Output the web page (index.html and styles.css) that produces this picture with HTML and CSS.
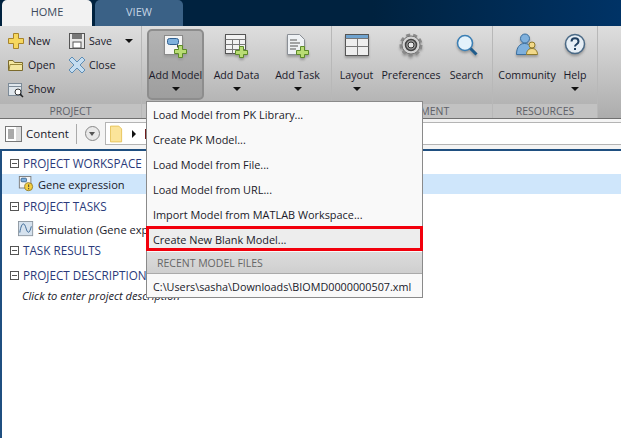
FILE: index.html
```html
<!DOCTYPE html>
<html lang="en">
<head>
    <meta charset="UTF-8">
    <title>SimBiology - Home</title>
    <link rel="stylesheet" href="styles.css">
</head>
<body>
    <div class="tabstrip">
        <div class="tab tab-active">HOME</div>
        <div class="tab tab-view">VIEW</div>
    </div>

    <div class="ribbon">
        <div class="section section-project">
            <div class="section-body project-grid">
                <div class="small-btn">
                    <svg class="ico" viewBox="0 0 18 18"><path d="M6.500 1.500h5v5h5v5h-5v5h-5v-5h-5v-5h5z" fill="#f6d75e" stroke="#a8842a"/></svg>
                    <span>New</span>
                </div>
                <div class="small-btn">
                    <svg class="ico" viewBox="0 0 18 18"><rect x="1.500" y="1.500" width="15" height="15" fill="#e8e8e8" stroke="#555"/><rect x="4" y="2" width="10" height="5" fill="#777"/><rect x="5" y="10" width="8" height="6" fill="#fff" stroke="#555"/></svg>
                    <span>Save</span>
                    <i class="caret caret-save"></i>
                </div>
                <div class="small-btn">
                    <svg class="ico" viewBox="0 0 18 18"><path d="M1.500 4.500v10h14v-8h-8l-1.500-2z" fill="#f3e6a0" stroke="#7b6a2c"/><path d="M2 14.500l1-6h13" fill="none" stroke="#9b8a3c"/></svg>
                    <span>Open</span>
                </div>
                <div class="small-btn">
                    <svg class="ico" viewBox="0 0 18 18"><path d="M4 1l5 5 5-5 3 3-5 5 5 5-3 3-5-5-5 5-3-3 5-5-5-5z" fill="#c5ddf0" stroke="#5d8db5"/></svg>
                    <span>Close</span>
                </div>
                <div class="small-btn">
                    <svg class="ico" viewBox="0 0 18 18"><rect x="1.500" y="3.500" width="13" height="12" fill="#dfe6ec" stroke="#7d8b98"/><path d="M1.500 6.500h13" stroke="#7d8b98"/><circle cx="11" cy="12" r="3" fill="#fff" stroke="#333"/><path d="M13 14l3 3" stroke="#222" stroke-width="1.500"/></svg>
                    <span>Show</span>
                </div>
            </div>
            <div class="section-label">PROJECT</div>
        </div>

        <div class="section section-model">
            <div class="section-body big-row">
                <div class="big-btn big-btn-on add-model">
                    <svg class="big-ico" viewBox="0 0 26 26"><rect x="1.500" y="2.500" width="18" height="19" fill="#f4f4f4" stroke="#8a8a8a"/><rect x="4.500" y="5.500" width="11" height="6" rx="2" fill="#7fb0dc" stroke="#2f5f8f"/><path d="M14.500 11.500v3" stroke="#444"/><path d="M15.500 12.500h4v4h4v4h-4v4h-4v-4h-4v-4h4z" fill="#b9dc74" stroke="#5d8a2a"/></svg>
                    <span>Add Model</span>
                    <i class="caret"></i>
                </div>
                <div class="big-btn add-data">
                    <svg class="big-ico" viewBox="0 0 26 26"><rect x="1.500" y="1.500" width="20" height="19" fill="#f2f2f2" stroke="#555"/><path d="M1.500 6.500h20M1.500 11.500h20M1.500 16.500h20M8.500 6.500v14M15.500 6.500v14" stroke="#777" fill="none"/><path d="M15.500 13.500h4v4h4v4h-4v3h-4v-3h-4v-4h4z" fill="#b9dc74" stroke="#5d8a2a"/></svg>
                    <span>Add Data</span>
                    <i class="caret"></i>
                </div>
                <div class="big-btn add-task">
                    <svg class="big-ico" viewBox="0 0 26 26"><path d="M2.500 1.500h12l5 5v15h-17z" fill="#eef1f4" stroke="#8a8f96"/><path d="M5 7h7M5 10h10M5 13h8M5 16h6" stroke="#555" fill="none"/><path d="M15.500 13.500h4v4h4v4h-4v3h-4v-3h-4v-4h4z" fill="#b9dc74" stroke="#5d8a2a"/></svg>
                    <span>Add Task</span>
                    <i class="caret"></i>
                </div>
            </div>
            <div class="section-label">&nbsp;</div>
        </div>

        <div class="section section-env">
            <div class="section-body big-row big-row-env">
                <div class="big-btn layout">
                    <svg class="big-ico" viewBox="0 0 26 26"><rect x="1.500" y="1.500" width="23" height="21" fill="#eee" stroke="#555"/><rect x="2" y="2" width="22" height="3" fill="#6fa3cf"/><path d="M1.500 5.500h23M1.500 13.500h23M13.500 5.500v17" stroke="#777" fill="none"/></svg>
                    <span>Layout</span>
                    <i class="caret"></i>
                </div>
                <div class="big-btn prefs">
                    <svg class="big-ico" viewBox="0 0 26 26"><circle cx="13" cy="12" r="10" fill="none" stroke="#8a8a8a" stroke-width="3" stroke-dasharray="4 3"/><circle cx="13" cy="12" r="9" fill="#d4d4d4" stroke="#777"/><circle cx="13" cy="12" r="5.500" fill="#9a9a9a" stroke="#444" stroke-width="1.500"/><circle cx="13" cy="12" r="3" fill="#e8e8e8" stroke="#333"/></svg>
                    <span>Preferences</span>
                </div>
                <div class="big-btn search">
                    <svg class="big-ico" viewBox="0 0 26 26"><circle cx="11" cy="10" r="7.500" fill="#e4f2fb" stroke="#3b7fb5" stroke-width="1.500"/><path d="M16.500 15.500l6 6" stroke="#1f5c8c" stroke-width="3"/></svg>
                    <span>Search</span>
                </div>
            </div>
            <div class="section-label label-env">ENVIRONMENT</div>
        </div>

        <div class="section section-res">
            <div class="section-body big-row big-row-res">
                <div class="big-btn community">
                    <svg class="big-ico" viewBox="0 0 26 26"><circle cx="11" cy="5.500" r="4.500" fill="#7fb0dc" stroke="#3a6f9f"/><path d="M2.500 21.500c0-7 3-11 8-11 3 0 5 1 6 4l-4 7z" fill="#7fb0dc" stroke="#3a6f9f"/><circle cx="18" cy="12" r="3" fill="#f2d98a" stroke="#8f7a2a"/><path d="M12.500 21.500c0-3.500 2-6 5.500-6s5.500 2.500 5.500 6z" fill="#f2d98a" stroke="#8f7a2a"/></svg>
                    <span>Community</span>
                </div>
                <div class="big-btn help">
                    <svg class="big-ico" viewBox="0 0 26 26"><circle cx="13" cy="11" r="9.500" fill="#e6eef5" stroke="#4b6a86" stroke-width="1.500"/><path d="M9.500 8.500c0-4.500 7-4.500 7 0 0 3-3.500 2.500-3.500 5" fill="none" stroke="#1f3f60" stroke-width="2"/><rect x="12" y="15" width="2" height="2" fill="#1f3f60"/></svg>
                    <span>Help</span>
                    <i class="caret"></i>
                </div>
            </div>
            <div class="section-label">RESOURCES</div>
        </div>
    </div>

    <div class="toolbar">
        <svg class="ico content-ico" viewBox="0 0 18 18"><rect x="0.500" y="1.500" width="16" height="15" fill="#ddd" stroke="#777"/><rect x="1" y="2" width="10" height="14" fill="#fff"/><path d="M3 5h6M3 7h6M3 9h6M3 11h6M3 13h6" stroke="#555"/></svg>
        <span class="content-label">Content</span>
        <span class="tool-sep"></span>
        <span class="round-btn"><i></i></span>
        <div class="address">
            <svg class="folder-ico" viewBox="0 0 14 18"><path d="M0.500 0.500h9l3 3v14h-12z" fill="#fbe49a" stroke="#e6c25a"/></svg>
            <i class="crumb-arrow"></i>
            <i class="crumb-next"></i>
        </div>
    </div>

    <div class="workspace">
        <div class="tree-head"><i class="minus"></i>PROJECT WORKSPACE</div>
        <div class="tree-row tree-row-sel">
            <svg class="tree-ico" viewBox="0 0 18 18"><rect x="1.500" y="0.500" width="13" height="13" fill="#f4f4f4" stroke="#777"/><rect x="3.500" y="2.500" width="6" height="4" rx="1" fill="#7fb0dc" stroke="#2f5f8f"/><circle cx="12" cy="12" r="4.500" fill="#f6cf3f" stroke="#8f7a2a"/><path d="M12 9.500v3M12 13.500v1.500" stroke="#333"/></svg>
            <span>Gene expression</span>
        </div>
        <div class="tree-head head-tasks"><i class="minus"></i>PROJECT TASKS</div>
        <div class="tree-row row-sim">
            <svg class="tree-ico" viewBox="0 0 18 18"><rect x="0.500" y="0.500" width="16" height="16" fill="#d6e2ee" stroke="#8a949e"/><path d="M2 13c2-12 5-12 7-5s4 6 6-2" fill="none" stroke="#2f5f8f"/></svg>
            <span>Simulation (Gene expression)</span>
        </div>
        <div class="tree-head"><i class="minus"></i>TASK RESULTS</div>
        <div class="tree-head head-desc"><i class="minus"></i>PROJECT DESCRIPTION</div>
        <div class="tree-note">Click to enter project description</div>
    </div>

    <div class="menu">
        <div class="menu-item">Load Model from PK Library...</div>
        <div class="menu-item">Create PK Model...</div>
        <div class="menu-item">Load Model from File...</div>
        <div class="menu-item">Load Model from URL...</div>
        <div class="menu-item">Import Model from MATLAB Workspace...</div>
        <div class="menu-item menu-item-marked">Create New Blank Model...</div>
        <div class="menu-head">RECENT MODEL FILES</div>
        <div class="menu-item menu-item-recent">C:\Users\sasha\Downloads\BIOMD0000000507.xml</div>
    </div>
</body>
</html>
```

FILE: styles.css
```css
html, body {
    height: 100%;
}

body {
    margin: 0;
    width: 621px;
    height: 438px;
    overflow: hidden;
    position: relative;
    display: flex;
    flex-direction: column;
    background: #fff;
    font-family: "Open Sans", "Noto Sans", sans-serif;
    font-size: 10.600px;
    color: #1a1a2a;
}

/* top strip with the two tabs */
.tabstrip {
    height: 26px;
    display: flex;
    padding-left: 2px;
    gap: 3px;
    font-size: 11px;
    background: linear-gradient(to right, #00223f, #00223f 60%, #003366);
}

.tab {
    width: 90px;
    line-height: 24px;
    text-align: center;
    border-radius: 5px 5px 0 0;
}

.tab-active {
    background: #f2f2f2;
    color: #3c4a5c;
}

.tab-view {
    width: 88px;
    background: #3a6186;
    color: #c4d4e4;
}

/* ribbon */
.ribbon {
    height: 92px;
    display: flex;
    background: linear-gradient(to bottom, #dedede, #acacac);
}

.section {
    display: flex;
    flex-direction: column;
    box-sizing: border-box;
    border-right: 1px solid #b8b8b8;
}

.section-body {
    flex: 1;
}

.section-label {
    height: 14px;
    line-height: 14px;
    font-size: 10.500px;
    text-align: center;
    color: #5e6168;
    background: #c2c2c2;
}

.section-project { width: 142px; }
.section-model { width: 190px; }
.section-env { width: 161px; }
.section-res { width: 105px; }

.project-grid {
    display: grid;
    grid-template-columns: 61px 1fr;
    grid-auto-rows: 24px;
    padding: 3px 0 0 7px;
}

.small-btn {
    display: flex;
    align-items: center;
    gap: 3px;
}

.small-btn:nth-child(5) {
    margin-top: -1px;
}

.ico {
    width: 18px;
    height: 18px;
    flex: none;
}

.caret {
    display: block;
    width: 0;
    height: 0;
    border-left: 4px solid transparent;
    border-right: 4px solid transparent;
    border-top: 4px solid #111;
}

.caret-save {
    margin-left: 10px;
}

.big-row {
    display: flex;
    padding: 3px 0 0 5px;
}

.big-row-env {
    padding-left: 0;
}

.big-row-res {
    padding-left: 3px;
}

.big-btn {
    display: flex;
    flex-direction: column;
    align-items: center;
    height: 71px;
    box-sizing: border-box;
    padding-top: 4px;
    white-space: nowrap;
}

.big-btn span {
    margin-top: 9px;
    margin-bottom: 5px;
}

.big-ico {
    width: 26px;
    height: 26px;
    flex: none;
    filter: drop-shadow(0 2px 1px #9a9a9a);
}

.big-btn-on {
    border: 2px solid #8d8d8d;
    border-radius: 5px;
    background: linear-gradient(to bottom, #b4b4b4, #9e9e9e);
    padding-top: 2px;
}

.add-model { width: 57px; }
.add-data { width: 61px; margin-left: 2px; }
.add-task { width: 61px; }
.layout { width: 49px; }
.prefs { width: 60px; }
.search { width: 51px; }
.community { width: 62px; }
.help { width: 34px; }

/* content toolbar */
.toolbar {
    height: 31px;
    display: flex;
    align-items: center;
    box-sizing: border-box;
    padding: 0 0 1px 5px;
    background: #f4f4f4;
    border-top: 1px solid #707070;
}

.content-ico {
    margin-right: 3px;
}

.content-label {
    font-size: 11.500px;
}

.tool-sep {
    width: 1px;
    height: 20px;
    margin: 0 8px 0 7px;
    background: #aaa;
}

.round-btn {
    width: 13px;
    height: 13px;
    border: 1px solid #888;
    border-radius: 50%;
    display: flex;
    align-items: center;
    justify-content: center;
    background: #e8e8e8;
}

.round-btn i {
    border-left: 3px solid transparent;
    border-right: 3px solid transparent;
    border-top: 4px solid #555;
}

.address {
    flex: 1;
    height: 23px;
    box-sizing: border-box;
    margin-left: 5px;
    display: flex;
    align-items: center;
    padding-left: 4px;
    background: #fff;
    border-top: 1px solid #b4b4b4;
    border-bottom: 1px solid #b4b4b4;
    border-left: 1px solid #b4b4b4;
}

.folder-ico {
    width: 13px;
    height: 18px;
}

.crumb-arrow {
    margin-left: 9px;
    border-top: 4px solid transparent;
    border-bottom: 4px solid transparent;
    border-left: 4px solid #111;
}

.crumb-next {
    width: 2px;
    height: 10px;
    margin-left: 9px;
    background: #6e1a1a;
}

/* project tree */
.workspace {
    flex: 1;
    padding-top: 1px;
    border-left: 2px solid #1f4f80;
    border-top: 2px solid #1f4f80;
    font-size: 11.100px;
}

.tree-head {
    height: 22px;
    line-height: 22px;
    display: flex;
    align-items: center;
    gap: 4px;
    padding-left: 8px;
    font-size: 11.700px;
    color: #2a3a7a;
}

.head-tasks {
    margin-top: 1px;
}

.head-desc {
    margin-top: 3px;
}

.minus {
    width: 7px;
    height: 7px;
    border: 1px solid #555;
    background: linear-gradient(#555, #555) center / 5px 1px no-repeat;
}

.tree-row {
    height: 20px;
    display: flex;
    align-items: center;
    gap: 4px;
    padding-left: 16px;
    white-space: nowrap;
}

.row-sim {
    margin-top: 2px;
}

.tree-ico {
    width: 16px;
    height: 16px;
    flex: none;
}

.tree-row-sel {
    background: #cfe6fb;
}

.tree-note {
    line-height: 20px;
    padding-left: 20px;
    font-style: italic;
}

/* dropdown menu over the ribbon */
.menu {
    position: absolute;
    left: 146px;
    top: 101px;
    width: 277px;
    box-sizing: border-box;
    background: #f9f9f9;
    border: 1px solid #8a8a8a;
    font-size: 10.900px;
}

.menu-item {
    height: 25px;
    line-height: 25px;
    padding-left: 6px;
    white-space: nowrap;
}

.menu-item-marked {
    background: #ededed;
    line-height: 27px;
    outline: 3px solid #f2000c;
    outline-offset: -3px;
    margin: -1px -1px 1px;
    padding-left: 7px;
}

.menu-item-recent {
    height: 23px;
    font-size: 10.800px;
}

.menu-head {
    height: 21px;
    line-height: 23px;
    padding-left: 10px;
    font-size: 10.500px;
    color: #666;
    background: linear-gradient(to bottom, #dcdcdc, #cfcfcf);
    border-bottom: 1px solid #aaa;
}
```
